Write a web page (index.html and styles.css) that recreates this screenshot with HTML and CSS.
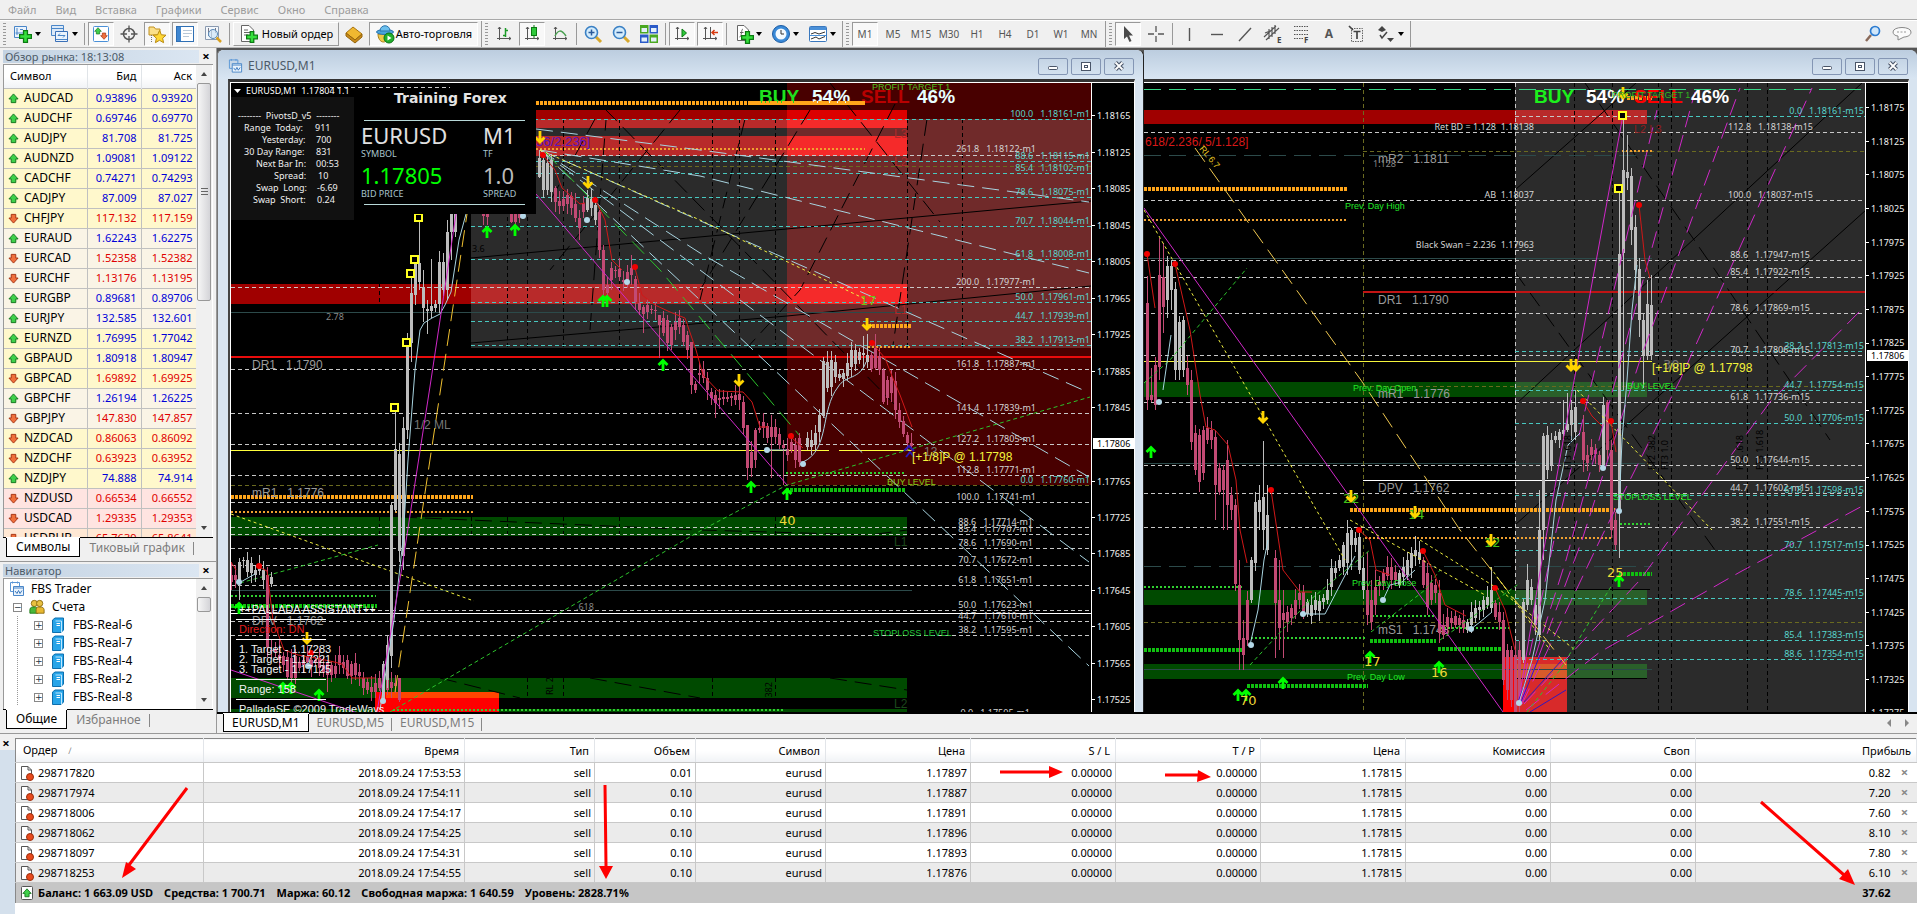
FILE: index.html
```html
<!DOCTYPE html>
<html lang="ru">
<head>
<meta charset="utf-8">
<title>EURUSD,M1</title>
<link rel="stylesheet" href="styles.css">
</head>
<body>
<svg class="defs" width="0" height="0" aria-hidden="true">
  <defs>
    <symbol id="up" viewBox="0 0 12 12"><path d="M6 1L11 6.500H8.500V10.500H3.500V6.500H1Z" fill="#3fd04a" stroke="#12701c" stroke-width="1"/></symbol>
    <symbol id="down" viewBox="0 0 12 12"><path d="M6 11L11 5.500H8.500V1.500H3.500V5.500H1Z" fill="#f0703c" stroke="#a02c0c" stroke-width="1"/></symbol>
    <symbol id="win" viewBox="0 0 16 16"><path d="M1.500 1.500H10.500V5.500M1.500 1.500V10.500H4.500M3.500 .500V2.500M8.500 .500V2.500" fill="none" stroke="#5a96d6"/><path d="M4.500 5.500H14.500V14.500H4.500Z" fill="#eaf3fc" stroke="#4a86c8"/><path d="M4.500 7H14.500" stroke="#4a86c8"/><path d="M6 10L8 12.500L9.500 9.500L11 12.500L13 9.500" fill="none" stroke="#3a78be"/></symbol>
    <symbol id="server" viewBox="0 0 14 16"><path d="M1.500 3L4 1H12.500V13L10 15.500H1.500Z" fill="#27a4e8" stroke="#0d6fae"/><path d="M4.500 4H10.500V15" fill="none" stroke="#bfe8ff"/><path d="M5.500 6.500H9M5.500 8.500H9" stroke="#fff"/></symbol>
    <symbol id="order" viewBox="0 0 16 16"><path d="M2.500 1.500H9L12.500 5V14.500H2.500Z" fill="#fff" stroke="#555"/><path d="M9 1.500V5H12.500" fill="none" stroke="#555"/><circle cx="11" cy="12" r="3.500" fill="#e84a1c" stroke="#9c2c0a"/></symbol>
    <symbol id="plus" viewBox="0 0 10 10"><path d="M3.500 .500H6.500V3.500H9.500V6.500H6.500V9.500H3.500V6.500H.500V3.500H3.500Z" fill="#35e03c" stroke="#0b7a12"/></symbol>
    <symbol id="au" viewBox="0 0 12 14"><path d="M6 13V3M1.500 7L6 2.500L10.500 7" fill="none" stroke="#0f0" stroke-width="2.800"/></symbol>
    <symbol id="ad" viewBox="0 0 12 14"><path d="M6 0V11M1.500 6.500L6 11L10.500 6.500" fill="none" stroke="#ffd400" stroke-width="2.800"/></symbol>
    <symbol id="axes" viewBox="0 0 16 16"><path d="M3.500 1V14M1 12.500H15M2 3L3.500 1L5 3M13 11L15 12.500L13 14" fill="none" stroke="#555"/></symbol>
  </defs>
</svg>

<nav class="menu"><a href="#">Файл</a><a href="#">Вид</a><a href="#">Вставка</a><a href="#">Графики</a><a href="#">Сервис</a><a href="#">Окно</a><a href="#">Справка</a></nav>

<div class="toolbar">
  <span class="grip"></span>
  <button class="tb drop" aria-label="Новый график"><svg viewBox="0 0 20 20"><path d="M1.500 2.500H13.500V13.500H1.500Z" fill="#eaf3fc" stroke="#4a86c8"/><path d="M4 4V11M2.500 9H12M7 5.500H10" stroke="#4a86c8"/><use href="#plus" x="6" y="6" width="13" height="13"/></svg></button>
  <button class="tb drop" aria-label="Профили"><svg viewBox="0 0 20 20"><path d="M1.500 1.500H13.500V11.500H1.500Z" fill="#dbe9f8" stroke="#4a86c8"/><path d="M5.500 7.500H17.500V17.500H5.500Z" fill="#eaf3fc" stroke="#3a70b8"/><path d="M2 4.500H13M6 15.500H17" stroke="#4a86c8"/><path d="M8 11.500H15M8 11.500L10 9.500M15 11.500L13 13.500" stroke="#4a86c8" fill="none"/></svg></button>
  <span class="sep"></span>
  <button class="tb on" aria-label="Обзор рынка"><svg viewBox="0 0 20 20"><rect x="2.500" y="2.500" width="15" height="15" rx="1" fill="#fff" stroke="#4a90d8"/><use href="#up" x="3" y="3" width="8" height="8"/><use href="#down" x="9" y="8" width="8" height="8"/></svg></button>
  <button class="tb" aria-label="Окно данных"><svg viewBox="0 0 20 20"><circle cx="10" cy="10" r="5.500" fill="none" stroke="#555" stroke-width="1.500"/><path d="M10 1.500V8M10 12V18.500M1.500 10H8M12 10H18.500" stroke="#555" stroke-width="1.300"/></svg></button>
  <button class="tb on" aria-label="Навигатор"><svg viewBox="0 0 20 20"><path d="M2 3H7L8.500 5H13V11H2Z" fill="#fbe08a" stroke="#c09020"/><path d="M4.500 11V18" stroke="#777" stroke-dasharray="1 1"/><path d="M12.500 6.500L14.400 10.800L19 11.200L15.600 14.200L16.600 18.700L12.500 16.300L8.400 18.700L9.400 14.200L6 11.200L10.600 10.800Z" fill="#ffd835" stroke="#b88a10"/></svg></button>
  <button class="tb on" aria-label="Терминал"><svg viewBox="0 0 20 20"><rect x="1.500" y="2.500" width="17" height="15" fill="#fff" stroke="#2f6fb4"/><path d="M2 3H6V17H2Z" fill="#3f86d0"/><path d="M8 6.500H17M8 9.500H17M8 12.500H14" stroke="#b8c8d8"/></svg></button>
  <button class="tb" aria-label="Тестер стратегий"><svg viewBox="0 0 20 20"><path d="M2.500 2.500H15.500V15.500H2.500Z" fill="#f4f8fc" stroke="#8a9ab0"/><path d="M5.500 4V12M8.500 6V14M12.500 4V9" stroke="#778"/><circle cx="10" cy="10" r="4.500" fill="#cfe6f8" fill-opacity=".7" stroke="#5a8ab8"/><path d="M13.500 13.500L18 18" stroke="#d8a020" stroke-width="2.500"/></svg></button>
  <span class="sep"></span>
  <button class="tb label raised"><svg viewBox="0 0 20 20"><path d="M2.500 1.500H10L14.500 6V17.500H2.500Z" fill="#fff" stroke="#666"/><path d="M5 6H9M5 8.500H12M5 11H9" stroke="#666"/><use href="#plus" x="7" y="7" width="12" height="12"/></svg>Новый ордер</button>
  <button class="tb" aria-label="MetaEditor"><svg viewBox="0 0 20 20"><path d="M2 9L9 3L18 10L11 16Z" fill="#f0b830" stroke="#a87410"/><path d="M2 9V12L11 19L18 13V10L11 16Z" fill="#c88a18" stroke="#94640c"/></svg></button>
  <button class="tb label on auto"><svg viewBox="0 0 20 20"><path d="M3 10H14C14 15 11 18 8.500 18C5 18 3 14 3 10Z" fill="#f0c848" stroke="#a88018"/><ellipse cx="10" cy="8" rx="8.500" ry="2.500" fill="#4aa4dc" stroke="#2a74ac"/><path d="M5 7C5 0 15 0 15 7Z" fill="#6cc0ee" stroke="#2a74ac"/><circle cx="14" cy="14" r="5" fill="#22b02c" stroke="#0c7014"/><path d="M12.500 11.500L16.500 14L12.500 16.500Z" fill="#fff"/></svg>Авто-торговля</button>
  <span class="end"></span><span class="grip"></span>
  <button class="tb" aria-label="Бары"><svg viewBox="0 0 20 20"><use href="#axes" x="2" y="2" width="16" height="16"/><path d="M11.500 4V13M9 11.500H11.500M11.500 6.500H14" stroke="#1c9a28" stroke-width="1.500"/></svg></button>
  <button class="tb on" aria-label="Свечи"><svg viewBox="0 0 20 20"><use href="#axes" x="2" y="2" width="16" height="16"/><path d="M12 1V14" stroke="#0b7a12"/><rect x="9.500" y="3.500" width="5" height="8" fill="#2ec83a" stroke="#0b7a12"/></svg></button>
  <button class="tb" aria-label="Линия"><svg viewBox="0 0 20 20"><use href="#axes" x="2" y="2" width="16" height="16"/><path d="M5 12C8 6 11 5 16 12" fill="none" stroke="#4aa052" stroke-width="1.500"/></svg></button>
  <span class="sep"></span>
  <button class="tb" aria-label="Приблизить"><svg viewBox="0 0 20 20"><path d="M12.500 12.500L18 18" stroke="#d8a82c" stroke-width="3"/><circle cx="8.500" cy="8.500" r="6" fill="#d4ecfc" stroke="#3a80c4" stroke-width="1.600"/><path d="M5.500 8.500H11.500M8.500 5.500V11.500" stroke="#2a5a9a" stroke-width="1.500"/></svg></button>
  <button class="tb" aria-label="Отдалить"><svg viewBox="0 0 20 20"><path d="M12.500 12.500L18 18" stroke="#d8a82c" stroke-width="3"/><circle cx="8.500" cy="8.500" r="6" fill="#d4ecfc" stroke="#3a80c4" stroke-width="1.600"/><path d="M5.500 8.500H11.500" stroke="#2a5a9a" stroke-width="1.500"/></svg></button>
  <button class="tb" aria-label="Плитка"><svg viewBox="0 0 20 20"><path d="M1 1H9.500V9.500H1ZM10.500 10.500H19V19H10.500Z" fill="#4aa820"/><path d="M10.500 1H19V9.500H10.500ZM1 10.500H9.500V19H1Z" fill="#2a5ac8"/><path d="M2.500 4H8V8H2.500ZM12 4H17.500V8H12ZM2.500 13.500H8V17.500H2.500ZM12 13.500H17.500V17.500H12Z" fill="#e4f0fa"/></svg></button>
  <span class="sep"></span>
  <button class="tb on" aria-label="Автопрокрутка"><svg viewBox="0 0 20 20"><use href="#axes" x="2" y="2" width="16" height="16"/><path d="M10 5V13L14.500 9Z" fill="#2ec83a" stroke="#0b7a12"/></svg></button>
  <button class="tb on" aria-label="Сдвиг графика"><svg viewBox="0 0 20 20"><use href="#axes" x="2" y="2" width="16" height="16"/><path d="M10.500 3V14" stroke="#555"/><path d="M18 8.500H12M14.500 6L12 8.500L14.500 11" stroke="#d83a10" stroke-width="1.500" fill="none"/></svg></button>
  <span class="sep"></span>
  <button class="tb drop" aria-label="Индикаторы"><svg viewBox="0 0 20 20"><path d="M3.500 1.500H10L14.500 6V16.500H3.500Z" fill="#fff" stroke="#666"/><path d="M9 5C7 5 8 13 5.500 13M6 8.500H9.500" fill="none" stroke="#666"/><use href="#plus" x="7" y="7" width="13" height="13"/></svg></button>
  <button class="tb drop" aria-label="Период"><svg viewBox="0 0 20 20"><circle cx="10" cy="10" r="8.500" fill="#3a8ad8" stroke="#1c5ca4"/><circle cx="10" cy="10" r="5.500" fill="#f4faff"/><path d="M10 6V10H13" fill="none" stroke="#333"/></svg></button>
  <button class="tb drop" aria-label="Шаблоны"><svg viewBox="0 0 20 20"><rect x="1.500" y="2.500" width="17" height="15" rx="1" fill="#fff" stroke="#3a78be"/><path d="M2 3H18V6H2Z" fill="#4a90d8"/><path d="M3 10L7 8.500L11 10L17 8M3 15L8 13L11 15L17 12.500" fill="none" stroke="#333"/><path d="M2 11.500H18" stroke="#4a90d8"/></svg></button>
  <span class="end"></span><span class="grip"></span>
  <button class="tb tf on">M1</button><button class="tb tf">M5</button><button class="tb tf">M15</button><button class="tb tf">M30</button><button class="tb tf">H1</button><button class="tb tf">H4</button><button class="tb tf">D1</button><button class="tb tf">W1</button><button class="tb tf">MN</button>
  <span class="end"></span><span class="grip"></span>
  <button class="tb on" aria-label="Курсор"><svg viewBox="0 0 20 20"><path d="M6 2V15L9 12.500L11.500 18L13.500 17L11 11.500H15Z" fill="#4a4a4a"/></svg></button>
  <button class="tb" aria-label="Перекрестие"><svg viewBox="0 0 20 20"><path d="M10 2V8M10 12V18M2 10H8M12 10H18" stroke="#555" stroke-width="1.300"/></svg></button>
  <span class="sep"></span>
  <button class="tb" aria-label="Вертикальная линия"><svg viewBox="0 0 20 20"><path d="M10.500 4V17" stroke="#555" stroke-width="1.400"/></svg></button>
  <button class="tb" aria-label="Горизонтальная линия"><svg viewBox="0 0 20 20"><path d="M4 10.500H16" stroke="#555" stroke-width="1.400"/></svg></button>
  <button class="tb" aria-label="Трендовая линия"><svg viewBox="0 0 20 20"><path d="M4 17L16 4" stroke="#555" stroke-width="1.400"/></svg></button>
  <button class="tb" aria-label="Канал"><svg viewBox="0 0 20 20"><path d="M1 13L13 2M3 16L16 4M2 9L7 7M6 15V5M9 13V3M12 10V1" stroke="#555" fill="none" stroke-width="1.200"/><text x="14" y="19" class="tag">E</text></svg></button>
  <button class="tb" aria-label="Фибоначчи"><svg viewBox="0 0 20 20"><path d="M3 2.500H17M3 6.500H17M3 10.500H17M3 14.500H12" stroke="#555" stroke-dasharray="1.500 1"/><text x="13" y="19" class="tag">F</text></svg></button>
  <button class="tb glyph">A</button>
  <button class="tb" aria-label="Текстовая метка"><svg viewBox="0 0 20 20"><rect x="4.500" y="4.500" width="11" height="13" fill="none" stroke="#666" stroke-dasharray="1.500 1"/><path d="M2 2L6 6M6.500 7.500H13.500M10 7.500V15" stroke="#444" stroke-width="1.700"/></svg></button>
  <button class="tb drop" aria-label="Стрелки"><svg viewBox="0 0 20 20"><path d="M2 6L6 2L10 6L6 8ZM11 14H18L14.500 18Z" fill="#444"/><path d="M4 11L6 14L11 8" fill="none" stroke="#444" stroke-width="1.500"/></svg></button>
  <span class="end"></span>
  <span class="spacer"></span>
  <button class="tb" aria-label="Поиск"><svg viewBox="0 0 20 20"><path d="M7 11L2 17" stroke="#8a6a5a" stroke-width="2.500"/><circle cx="11" cy="7" r="4.500" fill="#cfe6fa" stroke="#2a7ad0" stroke-width="1.700"/></svg></button>
  <button class="tb" aria-label="Чат"><svg viewBox="0 0 20 20"><path d="M1 8C1 2 19 2 19 8C19 12 14 13 12 13L6 16V12C3 12 1 10 1 8Z" fill="#fbfbfb" stroke="#888"/><path d="M5 8H15" stroke="#999" stroke-dasharray="2 1.500"/></svg></button>
</div>

<main class="main">
  <aside class="side">
    <section class="panel market">
      <header class="ptitle"><span>Обзор рынка: 18:13:08</span><button aria-label="Закрыть">×</button></header>
      <div class="pbody">
        <div class="scroll">
        <table class="quotes">
          <thead><tr><th>Символ</th><th>Бид</th><th>Аск</th></tr></thead>
          <tbody>
            <tr class="y u"><td><svg><use href="#up"/></svg>AUDCAD</td><td>0.93896</td><td>0.93920</td></tr>
            <tr class="y u"><td><svg><use href="#up"/></svg>AUDCHF</td><td>0.69746</td><td>0.69770</td></tr>
            <tr class="y u"><td><svg><use href="#up"/></svg>AUDJPY</td><td>81.708</td><td>81.725</td></tr>
            <tr class="y u"><td><svg><use href="#up"/></svg>AUDNZD</td><td>1.09081</td><td>1.09122</td></tr>
            <tr class="y u"><td><svg><use href="#up"/></svg>CADCHF</td><td>0.74271</td><td>0.74293</td></tr>
            <tr class="y u"><td><svg><use href="#up"/></svg>CADJPY</td><td>87.009</td><td>87.027</td></tr>
            <tr class="y d"><td><svg><use href="#down"/></svg>CHFJPY</td><td>117.132</td><td>117.159</td></tr>
            <tr class="c u"><td><svg><use href="#up"/></svg>EURAUD</td><td>1.62243</td><td>1.62275</td></tr>
            <tr class="c d"><td><svg><use href="#down"/></svg>EURCAD</td><td>1.52358</td><td>1.52382</td></tr>
            <tr class="c d"><td><svg><use href="#down"/></svg>EURCHF</td><td>1.13176</td><td>1.13195</td></tr>
            <tr class="c u"><td><svg><use href="#up"/></svg>EURGBP</td><td>0.89681</td><td>0.89706</td></tr>
            <tr class="c u"><td><svg><use href="#up"/></svg>EURJPY</td><td>132.585</td><td>132.601</td></tr>
            <tr class="y u"><td><svg><use href="#up"/></svg>EURNZD</td><td>1.76995</td><td>1.77042</td></tr>
            <tr class="y u"><td><svg><use href="#up"/></svg>GBPAUD</td><td>1.80918</td><td>1.80947</td></tr>
            <tr class="y d"><td><svg><use href="#down"/></svg>GBPCAD</td><td>1.69892</td><td>1.69925</td></tr>
            <tr class="c u"><td><svg><use href="#up"/></svg>GBPCHF</td><td>1.26194</td><td>1.26225</td></tr>
            <tr class="c d"><td><svg><use href="#down"/></svg>GBPJPY</td><td>147.830</td><td>147.857</td></tr>
            <tr class="y d"><td><svg><use href="#down"/></svg>NZDCAD</td><td>0.86063</td><td>0.86092</td></tr>
            <tr class="y d"><td><svg><use href="#down"/></svg>NZDCHF</td><td>0.63923</td><td>0.63952</td></tr>
            <tr class="y u"><td><svg><use href="#up"/></svg>NZDJPY</td><td>74.888</td><td>74.914</td></tr>
            <tr class="p d"><td><svg><use href="#down"/></svg>NZDUSD</td><td>0.66534</td><td>0.66552</td></tr>
            <tr class="p d"><td><svg><use href="#down"/></svg>USDCAD</td><td>1.29335</td><td>1.29353</td></tr>
            <tr class="o d"><td><svg><use href="#down"/></svg>USDRUB</td><td>65.7639</td><td>65.8641</td></tr>
          </tbody>
        </table>
        </div>
        <div class="vbar long"><i class="a-up"></i><b></b><i class="a-dn"></i></div>
      </div>
      <div class="tabs"><button class="cur">Символы</button><button>Тиковый график</button></div>
    </section>
    <section class="panel navi">
      <header class="ptitle"><span>Навигатор</span><button aria-label="Закрыть">×</button></header>
      <div class="pbody">
        <ul class="tree">
          <li class="l0"><svg><use href="#win"/></svg>FBS Trader</li>
          <li class="l1"><i class="box">−</i><svg viewBox="0 0 18 16"><circle cx="6" cy="4" r="3.500" fill="#e8c040" stroke="#8a6a10"/><circle cx="12" cy="4" r="3.500" fill="#e8c040" stroke="#8a6a10"/><path d="M1 15V11C1 8 4 8 6 8C8 8 10 9 10 11V15Z" fill="#4ab83a" stroke="#1c7a14"/><path d="M8 15V11C8 8 10 8 12.500 8C15 8 17 9 17 11V15Z" fill="#e8b830" stroke="#8a6a10"/></svg>Счета</li>
          <li class="l2"><i class="box">+</i><svg><use href="#server"/></svg>FBS-Real-6</li>
          <li class="l2"><i class="box">+</i><svg><use href="#server"/></svg>FBS-Real-7</li>
          <li class="l2"><i class="box">+</i><svg><use href="#server"/></svg>FBS-Real-4</li>
          <li class="l2"><i class="box">+</i><svg><use href="#server"/></svg>FBS-Real-2</li>
          <li class="l2"><i class="box">+</i><svg><use href="#server"/></svg>FBS-Real-8</li>
        </ul>
        <div class="vbar short"><i class="a-up"></i><b></b><i class="a-dn"></i></div>
      </div>
      <div class="tabs"><button class="cur">Общие</button><button>Избранное</button></div>
    </section>
  </aside>

  <div class="mdi">
    <div class="windows">
      <section class="window first">
        <header class="wtitle"><svg class="wicon"><use href="#win"/></svg><span>EURUSD,M1</span>
          <button aria-label="Свернуть"><svg viewBox="0 0 14 14"><rect x="2.500" y="7.500" width="9" height="3" rx="1" fill="#fff" stroke="#4a5568"/></svg></button>
          <button aria-label="Развернуть"><svg viewBox="0 0 14 14"><rect x="2.500" y="3.500" width="9" height="8" fill="#fff" stroke="#4a5568"/><rect x="5.500" y="6.500" width="3" height="2" fill="#fff" stroke="#4a5568"/></svg></button>
          <button aria-label="Закрыть"><svg viewBox="0 0 14 14"><path d="M3.500 3.500L10.500 10.500M10.500 3.500L3.500 10.500" stroke="#4a5568" stroke-width="4"/><path d="M3.500 3.500L10.500 10.500M10.500 3.500L3.500 10.500" stroke="#fff" stroke-width="1.800"/></svg></button>
        </header>
        <div class="client">
          <svg class="chart"><g transform="translate(-231 -83)">
            <rect x="787" y="83" width="304" height="402" fill="#480000"/>
            <rect x="471" y="110" width="316" height="238" fill="#2b2b2b"/>
            <rect x="787" y="119" width="304" height="229" fill="#702a2a"/>
            <path d="M471 110H787V119H471ZM231 284H471V304H231Z" fill="#a00000"/>
            <path d="M471 119H787V128H471ZM471 136H787V156H471ZM471 284H787V304H471Z" fill="#b82a2a"/>
            <path d="M787 110H907V119H787Z" fill="#dc0000"/>
            <path d="M787 119H907V128H787ZM787 136H907V156H787ZM787 284H907V304H787Z" fill="#f52a2a"/>
            <path d="M231 517H907V536H231ZM231 678H907V698H231ZM231 709H907V712H231Z" fill="#004a00"/>
            <path d="M375 692H499V712H375Z" fill="#f00"/><path d="M386 692H499V698H386Z" fill="#ff4500"/>
            <path class="k dash" d="M507.500 119V348M527.500 119V348M563.500 119V348M619.500 119V348M712.500 119V348M739.500 119V348M775.500 119V348M907.500 119V348M962.500 119V348M379.500 284V312M379.500 517V536M471.500 517V536M507.500 517V536M563.500 517V536M619.500 517V536M775.500 517V536M527.500 678V698M563.500 678V698M712.500 678V698M775.500 678V698M907.500 678V698"/>
            <path class="k" d="M471 258L1091 201M471 343L787 316L1091 286"/>
            <path class="k long" d="M605 109L900 410M830 83L940 222M595 119L548 205M745 119L700 300M680 110L550 270M810 110L700 290M895 104L800 290L745 350M927 119L893 345M590 330L606 120M400 517L700 530L870 535L907 530M440 678L520 698M590 678L700 698M830 678L907 690"/>
            <path class="teal" d="M231 312.500H912M231 590.500H912"/>
            <path class="olive dash" d="M471 166.500H1091M231 485.500H1091"/>
            <path class="w dash" d="M231 155.500H1091M231 287.500H1091M231 369.500H1091M231 413.500H1091M231 444.500H1091M231 475.500H1091M231 502.500H1091M231 527.500H1091M231 534.500H1091M231 548.500H1091M231 565.500H1091M231 585.500H1091M231 610.500H1091M231 621.500H1091M231 635.500H1091M330 87.500H450"/>
            <path class="cy dash" d="M471 119.500H1091M471 161.500H1091M471 173.500H1091M471 197.500H1091M471 226.500H1091M471 259.500H1091M471 302.500H1091M471 321.500H1091M471 345.500H1091"/>
            <path d="M231 357H1091" stroke="#e80c0c" stroke-width="2"/>
            <path d="M231 450.500H829M839 450.500H912" stroke="#ffff3c"/>
            <path d="M231 613.500H1091" stroke="#fff"/>
            <path class="ot" d="M536 103H865M231 497H473M868 326H912"/>
            <path class="on1" d="M536 149H865M231 512H473M868 347H912"/>
            <path class="gt" d="M231 606H377M786 490H905"/>
            <path class="gn" d="M231 596H376M786 473H904M393 710H784"/>
            <path class="lb long" d="M536 129L700 150L1089 202M540 150L700 176L1089 273M540 150L1083 390M540 150L700 253L1089 477M540 150L700 270L1089 562M540 150L700 300L1089 666"/>
            <path class="ye fine" d="M540 150L700 220L865 299M231 514L474 601"/>
            <path class="gl long" d="M545 152L660 270L800 436"/>
            <path class="gl dash" d="M240 583L378 545M390 712L700 531L787 485L1090 397"/>
            <text class="dim" x="326" y="320">2.78</text><text class="dim" x="576" y="610">.618</text><text class="dim dk" x="472" y="252">3.6</text>
            <text class="piv" x="252" y="369">DR1   1.1790</text><text class="piv" x="252" y="497">mR1   1.1776</text><text class="piv" x="252" y="625">DPV   1.1762</text>
            <text class="dim2" x="414" y="429">1/2 ML</text><text class="dim2" x="924" y="456">13</text>
            <text class="vio" x="536" y="146">36/2.236]</text>
            <g id="c1"></g>
            <path class="lb" d="M380 710L394 620L403 540L408 460L415 370L420 330L424 323L432 318L440 314L445 305L451 292L459 240L466 214M239 583L246 579L255 574M803 462C830 450 820 410 838 387C845 375 860 380 866 362M766 450H787"/>
            <path class="mg" d="M377 712L402 567L431 380L456 214M536 194L787 485M231 670L355 712"/>
            <path d="M395 692L467 214" fill="none" stroke="#f0c030" class="long"/>
            <path class="rd" d="M231 562L236 570M259 567L267 571L273 620L284 650L298 655L310 657L330 661L342 664L352 678H375M543 155L555 170L562 188L570 195L580 204L585 203M595 199L605 220L612 260L622 270M635 268L642 295L655 305L670 312L685 318L696 350L703 375L718 391L743 392L752 402L760 427L768 427M791 437L803 448M872 343L885 358L892 376L900 395L912 427"/>
            <g class="rdot"><circle cx="259" cy="566" r="3"/><circle cx="311" cy="653" r="3"/><circle cx="543" cy="155" r="3"/><circle cx="595" cy="200" r="3"/><circle cx="635" cy="267" r="3"/><circle cx="872" cy="343" r="3"/><circle cx="791" cy="436" r="3"/></g>
            <g class="bdot"><circle cx="239" cy="582" r="3"/><circle cx="308" cy="666" r="3"/><circle cx="383" cy="701" r="3"/><circle cx="523" cy="216" r="3"/><circle cx="587" cy="220" r="3"/><circle cx="627" cy="282" r="3"/><circle cx="767" cy="450" r="3"/><circle cx="803" cy="464" r="3"/></g>
            <g class="box2"><rect x="415" y="214" width="7" height="7"/><rect x="411" y="256" width="7" height="7"/><rect x="407" y="270" width="7" height="7"/><rect x="403" y="339" width="7" height="7"/><rect x="391" y="404" width="7" height="7"/></g>
            <use href="#au" x="481" y="225" width="12" height="14"/><use href="#au" x="509" y="223" width="12" height="14"/><use href="#au" x="597" y="294" width="12" height="14"/><use href="#au" x="601" y="294" width="12" height="14"/><use href="#au" x="657" y="358" width="12" height="14"/><use href="#au" x="745" y="480" width="12" height="14"/><use href="#au" x="781" y="487" width="12" height="14"/><use href="#au" x="233" y="601" width="12" height="14"/><use href="#au" x="277" y="681" width="12" height="14"/><use href="#au" x="285" y="681" width="12" height="14"/><use href="#au" x="313" y="688" width="12" height="14"/>
            <use href="#ad" x="534" y="131" width="12" height="14"/><use href="#ad" x="582" y="176" width="12" height="14"/><use href="#ad" x="733" y="374" width="12" height="14"/><use href="#ad" x="861" y="318" width="12" height="14"/><use href="#ad" x="301" y="632" width="12" height="14"/>
            <path d="M904 451L909 446L914 451M906 457L910 452L914 457" stroke="#2a18b8" stroke-width="2" fill="none"/>
            <rect x="231" y="97" width="123" height="123" fill="#111"/><rect x="354" y="88" width="182" height="126" fill="#000"/>
            <path d="M234 89H241L237.500 93Z" fill="#fff"/>
            <text class="t10" x="246" y="94">EURUSD,M1  1.17804 1.1</text>
            <g class="t9"><text x="238" y="119">--------  PivotsD_v5  --------</text><text x="244" y="131">Range  Today:</text><text x="315" y="131">911</text><text x="262" y="143">Yesterday:</text><text x="316" y="143">700</text><text x="244" y="155">30 Day Range:</text><text x="316" y="155">831</text><text x="256" y="167">Next Bar In:</text><text x="316" y="167">00:53</text><text x="274" y="179">Spread:</text><text x="318" y="179">10</text><text x="256" y="191">Swap  Long:</text><text x="317" y="191">-6.69</text><text x="253" y="203">Swap  Short:</text><text x="317" y="203">0.24</text></g>
            <text class="train" x="394" y="103">Training Forex</text>
            <path d="M364 120.500H525M364 204.500H525" stroke="#b8d8d8"/>
            <g class="big"><text x="361" y="144">EURUSD</text><text x="483" y="144">M1</text><text x="361" y="184" fill="#0f0">1.17805</text><text x="483" y="184" fill="#bbb">1.0</text></g>
            <g class="cap"><text x="361" y="157">SYMBOL</text><text x="483" y="157">TF</text><text x="361" y="197">BID PRICE</text><text x="483" y="197">SPREAD</text></g>
            <text class="bs" x="759" y="103" fill="#1fe01f">BUY</text><text class="bs" x="812" y="103" fill="#e8ffff">54%</text><text class="bs" x="861" y="103" fill="#b80000">SELL</text><text class="bs" x="917" y="103" fill="#e8ffff">46%</text>
            <path class="ot" d="M750 103H865"/>
            <text class="ar" x="872" y="90" fill="#50c020">PROFIT TARGET 1</text><text class="ar" x="887" y="485" fill="#80d018">BUY LEVEL</text><text class="ar" x="873" y="636" fill="#20c838">STOPLOSS LEVEL</text>
            <text class="ar12" x="912" y="461" fill="#f4f43c">[+1/8]P @ 1.17798</text>
            <text class="num" x="779" y="525" fill="#f0d838">40</text><text class="num" x="860" y="305" fill="#70c010">17</text>
            <g class="ar12" fill="#b02828"><text x="894" y="138">L3</text><text x="894" y="166">L2</text><text x="894" y="314">L1</text></g><g class="ar12" fill="#1c481c"><text x="894" y="546">L1</text><text x="894" y="708">L2</text></g>
            <g><text class="dim dk" transform="translate(553 695) rotate(-90)">RL 2</text><text class="dim dk" transform="translate(772 700) rotate(-90)">.382</text></g>
            <g class="lv cyt"><text x="1090" y="117">100.0   1.18161-m1</text><text x="1090" y="159">88.6   1.18115-m1</text><text x="1090" y="171">85.4   1.18102-m1</text><text x="1090" y="195">78.6   1.18075-m1</text><text x="1090" y="224">70.7   1.18044-m1</text><text x="1090" y="257">61.8   1.18008-m1</text><text x="1090" y="300">50.0   1.17961-m1</text><text x="1090" y="319">44.7   1.17939-m1</text><text x="1090" y="343">38.2   1.17913-m1</text><text x="1090" y="483">0.0   1.17760-m1</text></g>
            <g class="lv"><text x="1036" y="152">261.8   1.18122-m1</text><text x="1036" y="285">200.0   1.17977-m1</text><text x="1036" y="367">161.8   1.17887-m1</text><text x="1036" y="411">141.4   1.17839-m1</text><text x="1036" y="442">127.2   1.17805-m1</text><text x="1036" y="473">112.8   1.17771-m1</text><text x="1036" y="500">100.0   1.17741-m1</text><text x="1033" y="525">88.6   1.17714-m1</text><text x="1033" y="532">85.4   1.17707-m1</text><text x="1033" y="546">78.6   1.17690-m1</text><text x="1033" y="563">70.7   1.17672-m1</text><text x="1033" y="583">61.8   1.17651-m1</text><text x="1033" y="608">50.0   1.17623-m1</text><text x="1033" y="619">44.7   1.17610-m1</text><text x="1033" y="633">38.2   1.17595-m1</text><text x="1030" y="716">0.0   1.17505-m1</text></g>
            <g class="ar11"><text x="239" y="613">++PALLADA ASSISTANT++</text><text x="239" y="633" fill="#e01c1c">Direction: DN</text><text x="239" y="653">1. Target - 1.17283</text><text x="239" y="663">2. Target - 1.17221</text><text x="239" y="673">3. Target - 1.17125</text><text x="239" y="693">Range: 158</text><text x="239" y="713">PalladaSE ©2009 TradeWays</text></g>
            <path d="M236 619.500H326M236 639.500H326M236 679.500H326M236 699.500H326" stroke="#fff"/>
            <path d="M1092 83H1800V1400H1092Z" fill="#000"/><path d="M1091.500 83V1400" stroke="#fff"/>
            <path d="M1092 115.500h3M1092 152.500h3M1092 188.500h3M1092 225.500h3M1092 261.500h3M1092 298.500h3M1092 334.500h3M1092 371.500h3M1092 407.500h3M1092 481.500h3M1092 517.500h3M1092 553.500h3M1092 590.500h3M1092 626.500h3M1092 663.500h3M1092 699.500h3" stroke="#fff"/>
            <g class="ax"><text x="1097" y="119">1.18165</text><text x="1097" y="156">1.18125</text><text x="1097" y="192">1.18085</text><text x="1097" y="229">1.18045</text><text x="1097" y="265">1.18005</text><text x="1097" y="302">1.17965</text><text x="1097" y="338">1.17925</text><text x="1097" y="375">1.17885</text><text x="1097" y="411">1.17845</text><text x="1097" y="485">1.17765</text><text x="1097" y="521">1.17725</text><text x="1097" y="557">1.17685</text><text x="1097" y="594">1.17645</text><text x="1097" y="630">1.17605</text><text x="1097" y="667">1.17565</text><text x="1097" y="703">1.17525</text></g>
            <rect x="1093" y="438" width="41" height="11" fill="#fff"/><text class="ax now" x="1097" y="447">1.17806</text>
          </g></svg>
        </div>
      </section>
      <section class="window second">
        <header class="wtitle"><span></span>
          <button aria-label="Свернуть"><svg viewBox="0 0 14 14"><rect x="2.500" y="7.500" width="9" height="3" rx="1" fill="#fff" stroke="#4a5568"/></svg></button>
          <button aria-label="Развернуть"><svg viewBox="0 0 14 14"><rect x="2.500" y="3.500" width="9" height="8" fill="#fff" stroke="#4a5568"/><rect x="5.500" y="6.500" width="3" height="2" fill="#fff" stroke="#4a5568"/></svg></button>
          <button aria-label="Закрыть"><svg viewBox="0 0 14 14"><path d="M3.500 3.500L10.500 10.500M10.500 3.500L3.500 10.500" stroke="#4a5568" stroke-width="4"/><path d="M3.500 3.500L10.500 10.500M10.500 3.500L3.500 10.500" stroke="#fff" stroke-width="1.800"/></svg></button>
        </header>
        <div class="client">
          <svg class="chart"><g transform="translate(-1144 -83)">
            <rect x="1515" y="83" width="351" height="629" fill="#2b2b2b"/>
            <path d="M1144 110H1515V124H1144Z" fill="#a00000"/><path d="M1515 110H1647V124H1515Z" fill="#b82a2a"/>
            <path d="M1144 382H1515V397H1144ZM1144 590H1515V605H1144ZM1144 664H1515V679H1144Z" fill="#004a00"/>
            <path d="M1515 382H1647V397H1515ZM1515 590H1647V605H1515ZM1515 664H1647V679H1515Z" fill="#2a602a"/>
            <path d="M1503 657H1567V712H1503Z" fill="#d82a2a"/><path d="M1503 657H1515V712H1503Z" fill="#f00"/><path d="M1515 664H1567V679H1515Z" fill="#d85a2a"/>
            <path class="k dash" d="M1574.500 83V712M1612.500 83V712M1658.500 83V712M1671.500 83V712M1747.500 83V712M1767.500 83V712"/>
            <path class="k" d="M1515 190L1636 83M1515 405L1862 83M1515 525L1866 210M1144 589.500H1650M1515 678.500H1647"/>
            <path class="k long" d="M1585 83L1715 270L1830 440M1515 272L1600 390L1715 550"/>
            <path class="teal" d="M1144 258.500H1652M1144 463.500H1645M1144 669.500H1652"/><path class="teal long" d="M1144 155.500H1652M1144 566.500H1652"/>
            <path class="olive dash" d="M1363 151.500H1866M1363 386.500H1866M1144 622.500H1866M1363.500 83V712"/>
            <path d="M1144 89.500H1866" stroke="#38d888" class="long"/>
            <path class="w dash" d="M1515 116.500H1647M1144 132.500H1866M1144 200.500H1866M1515 250.500H1533M1144 260.500H1866M1144 277.500H1866M1144 313.500H1866M1144 355.500H1866M1144 402.500H1866M1144 465.500H1866M1144 493.500H1866M1144 527.500H1866M1515.500 83V712"/>
            <path class="cy dash" d="M1647 116.500H1866M1515 351.500H1866M1515 390.500H1866M1515 423.500H1866M1515 495.500H1866M1515 550.500H1866M1515 598.500H1866M1515 640.500H1866M1515 659.500H1866"/>
            <path d="M1363 292H1866" stroke="#c01414" stroke-width="2"/><path d="M1144 361.500H1652" stroke="#f4f43c"/><path d="M1363 480.500H1866" stroke="#fff"/>
            <path class="ot" d="M1144 189H1348M1350 510H1615M1627 98H1652"/><path class="on1" d="M1144 220H1348M1365 538H1613M1622 151H1652"/>
            <path class="gt" d="M1144 650H1244M1247 686H1368M1370 641H1436M1438 649H1502M1619 574H1652"/><path class="gn" d="M1144 587H1243M1247 638H1367M1372 616H1434M1440 628H1512M1620 524H1651"/>
            <g class="piv"><text x="1378" y="163">mR2   1.1811</text><text x="1378" y="304">DR1   1.1790</text><text x="1378" y="398">mR1   1.1776</text><text x="1378" y="492">DPV   1.1762</text><text x="1378" y="634">mS1   1.1748</text></g><text class="dim" x="1373" y="167">1.128</text>
            <g id="c2"></g>
            <path class="mg" d="M1144 208L1503 712M1518 705L1542 560L1565 430L1623 115"/>
            <path class="mg long" d="M1519 704L1554 540L1657 110M1520 704L1566 560L1610 400L1695 92M1521 704L1582 540L1640 360L1740 88M1522 704L1600 540L1680 380L1812 88M1524 704L1640 580L1770 402L1866 305M1526 710L1600 652L1740 572L1866 504"/>
            <path d="M1518 702L1530 670M1521 702L1540 655M1524 702L1562 660M1530 712L1566 690" stroke="#3018c0" fill="none"/>
            <path class="long" d="M1195 148L1363 383L1460 530L1566 665" stroke="#f0c850" fill="none"/>
            <path class="ye fine" d="M1144 210L1190 290L1262 415L1345 560M1577 390L1712 530M1350 520L1485 595M1420 540L1500 590L1575 650M1490 567L1550 650"/>
            <path class="gl dash" d="M1144 383L1170 360L1247 268M1250 665L1310 600L1370 550M1371 632L1425 590L1440 570M1440 640L1520 583M1527 712L1560 670L1612 585"/>
            <path class="rd" d="M1147 254L1155 308M1175 264L1190 330L1200 395L1206 427L1215 430L1228 445L1236 480L1240 530L1247 563M1271 490L1283 570L1300 592L1312 592M1359 530L1370 540L1376 570L1390 575M1423 551L1435 575L1445 605L1466 616M1495 588L1505 610L1515 650M1583 401L1592 416L1602 426M1611 421L1616 452M1639 205L1645 260L1650 278"/>
            <path class="lb" d="M1163 390L1171 335M1250 645L1258 610L1264 560L1268 540M1303 614H1325L1340 585L1355 556M1383 600L1390 585L1402 582L1415 570M1471 629L1480 622L1492 612M1519 703L1532 660L1545 600L1556 500L1568 445L1580 433M1619 510L1622 440L1627 380L1632 310L1637 265"/>
            <g class="rdot"><circle cx="1147" cy="254" r="3"/><circle cx="1175" cy="264" r="3"/><circle cx="1271" cy="490" r="3"/><circle cx="1359" cy="530" r="3"/><circle cx="1423" cy="551" r="3"/><circle cx="1495" cy="588" r="3"/><circle cx="1583" cy="401" r="3"/><circle cx="1611" cy="421" r="3"/><circle cx="1639" cy="205" r="3"/></g>
            <g class="bdot"><circle cx="1159" cy="402" r="3"/><circle cx="1251" cy="645" r="3"/><circle cx="1303" cy="614" r="3"/><circle cx="1383" cy="600" r="3"/><circle cx="1471" cy="629" r="3"/><circle cx="1519" cy="703" r="3"/><circle cx="1603" cy="468" r="3"/><circle cx="1619" cy="511" r="3"/></g>
            <g class="box2"><rect x="1619" y="112" width="7" height="7"/><rect x="1615" y="185" width="7" height="7"/></g>
            <use href="#au" x="1145" y="445" width="12" height="14"/><use href="#au" x="1232" y="688" width="12" height="14"/><use href="#au" x="1240" y="688" width="12" height="14"/><use href="#au" x="1277" y="676" width="12" height="14"/><use href="#au" x="1364" y="650" width="12" height="14"/><use href="#au" x="1433" y="660" width="12" height="14"/><use href="#au" x="1613" y="574" width="12" height="14"/>
            <g class="num" fill="#40c018"><text x="1343" y="503">22</text><text x="1408" y="519">14</text><text x="1484" y="547">12</text></g>
            <use href="#ad" x="1257" y="411" width="12" height="14"/><use href="#ad" x="1345" y="490" width="12" height="14"/><use href="#ad" x="1409" y="506" width="12" height="14"/><use href="#ad" x="1485" y="534" width="12" height="14"/><use href="#ad" x="1565" y="359" width="12" height="14"/><use href="#ad" x="1570" y="359" width="12" height="14"/>
            <g class="num" fill="#f0d838"><text x="1364" y="666">17</text><text x="1431" y="677">16</text><text x="1240" y="705">70</text><text x="1607" y="577">25</text></g><text class="num" x="1663" y="369" fill="#777">30</text>
            <g><text class="dim dk" transform="translate(1571 470) rotate(-90)">FT3 .618</text><text class="dim dk" transform="translate(1655 470) rotate(-90)">FT2 .382</text><text class="dim dk" transform="translate(1668 470) rotate(-90)">FT3 1.0</text><text class="dim dk" transform="translate(1743 470) rotate(-90)">FT2 .618</text><text class="dim dk" transform="translate(1763 470) rotate(-90)">FT3 1.618</text></g>
            <text class="ar12" x="1145" y="146" fill="#d81818">618/2.236/.5/1.128]</text>
            <text class="ar" transform="translate(1199 149) rotate(50)" fill="#e0c020">RL 6.7</text>
            <g class="ar" fill="#20e828"><text x="1345" y="209">Prev. Day High</text><text x="1353" y="391">Prev. Day Open</text><text x="1352" y="586">Prev. Day Close</text><text x="1347" y="680">Prev. Day Low</text><text x="1627" y="389">BUY LEVEL</text><text x="1613" y="500">STOPLOSS LEVEL</text></g>
            <text class="bs" x="1534" y="103" fill="#1cf01c">BUY</text><text class="bs" x="1586" y="103" fill="#fff">54%</text><text class="bs" x="1634" y="103" fill="#f00">SELL</text><text class="bs" x="1691" y="103" fill="#fff">46%</text>
            <use href="#ad" x="1617" y="87" width="12" height="14"/><text class="ar" x="1612" y="98" fill="#30b820">PROFIT TARGET 1</text>
            <text class="ar11" x="1634" y="133" fill="#901c1c">L2 L3</text>
            <g class="lv"><text x="1534" y="130">Ret BD = 1.128  1.18138</text><text x="1534" y="198">AB  1.18037</text><text x="1534" y="248">Black Swan = 2.236  1.17963</text>
            <text x="1813" y="130">112.8   1.18138-m15</text><text x="1813" y="198">100.0   1.18037-m15</text><text x="1810" y="258">88.6   1.17947-m15</text><text x="1810" y="275">85.4   1.17922-m15</text><text x="1810" y="311">78.6   1.17869-m15</text><text x="1810" y="353">70.7   1.17806-m15</text><text x="1810" y="400">61.8   1.17736-m15</text><text x="1810" y="463">50.0   1.17644-m15</text><text x="1810" y="491">44.7   1.17602-m15</text><text x="1810" y="525">38.2   1.17551-m15</text></g>
            <g class="lv cyt"><text x="1864" y="114">0.0   1.18161-m15</text><text x="1864" y="349">38.2   1.17813-m15</text><text x="1864" y="388">44.7   1.17754-m15</text><text x="1864" y="421">50.0   1.17706-m15</text><text x="1864" y="493">61.8   1.17598-m15</text><text x="1864" y="548">70.7   1.17517-m15</text><text x="1864" y="596">78.6   1.17445-m15</text><text x="1864" y="638">85.4   1.17383-m15</text><text x="1864" y="657">88.6   1.17354-m15</text></g>
            <text class="ar12" x="1652" y="372" fill="#f4f43c">[+1/8]P @ 1.17798</text>
            <path d="M1866 83H2600V1400H1866Z" fill="#000"/><path d="M1865.500 83V1400" stroke="#fff"/>
            <path d="M1866 107.500h3M1866 141.500h3M1866 174.500h3M1866 208.500h3M1866 242.500h3M1866 275.500h3M1866 309.500h3M1866 343.500h3M1866 376.500h3M1866 410.500h3M1866 443.500h3M1866 477.500h3M1866 511.500h3M1866 545.500h3M1866 578.500h3M1866 612.500h3M1866 645.500h3M1866 679.500h3" stroke="#fff"/>
            <g class="ax"><text x="1871" y="111">1.18175</text><text x="1871" y="145">1.18125</text><text x="1871" y="178">1.18075</text><text x="1871" y="212">1.18025</text><text x="1871" y="246">1.17975</text><text x="1871" y="279">1.17925</text><text x="1871" y="313">1.17875</text><text x="1871" y="346">1.17825</text><text x="1871" y="380">1.17775</text><text x="1871" y="414">1.17725</text><text x="1871" y="447">1.17675</text><text x="1871" y="481">1.17625</text><text x="1871" y="515">1.17575</text><text x="1871" y="548">1.17525</text><text x="1871" y="582">1.17475</text><text x="1871" y="616">1.17425</text><text x="1871" y="649">1.17375</text><text x="1871" y="683">1.17325</text><text x="1871" y="716">1.17275</text></g>
            <rect x="1867" y="350" width="41" height="11" fill="#fff"/><text class="ax now" x="1871" y="359">1.17806</text>
          </g></svg>
        </div>
      </section>
    </div>
    <div class="tabs wtabs"><button class="cur">EURUSD,M1</button><button>EURUSD,M5</button><button>EURUSD,M15</button><span class="arrows"><i></i><i></i></span></div>
  </div>
</main>

<section class="terminal">
  <div class="tside"><button aria-label="Закрыть">×</button></div>
  <table class="orders">
    <colgroup><col class="c1"><col class="c2"><col class="c3"><col class="c4"><col class="c3"><col class="c5"><col class="c5"><col class="c5"><col class="c5"><col class="c5"><col class="c5"><col></colgroup>
    <thead><tr><th>Ордер <small>∕</small></th><th>Время</th><th>Тип</th><th>Объем</th><th>Символ</th><th>Цена</th><th>S / L</th><th>T / P</th><th>Цена</th><th>Комиссия</th><th>Своп</th><th>Прибыль</th></tr></thead>
    <tbody>
      <tr><td><svg><use href="#order"/></svg>298717820</td><td>2018.09.24 17:53:53</td><td>sell</td><td>0.01</td><td>eurusd</td><td>1.17897</td><td>0.00000</td><td>0.00000</td><td>1.17815</td><td>0.00</td><td>0.00</td><td>0.82<button>×</button></td></tr>
      <tr><td><svg><use href="#order"/></svg>298717974</td><td>2018.09.24 17:54:11</td><td>sell</td><td>0.10</td><td>eurusd</td><td>1.17887</td><td>0.00000</td><td>0.00000</td><td>1.17815</td><td>0.00</td><td>0.00</td><td>7.20<button>×</button></td></tr>
      <tr><td><svg><use href="#order"/></svg>298718006</td><td>2018.09.24 17:54:17</td><td>sell</td><td>0.10</td><td>eurusd</td><td>1.17891</td><td>0.00000</td><td>0.00000</td><td>1.17815</td><td>0.00</td><td>0.00</td><td>7.60<button>×</button></td></tr>
      <tr><td><svg><use href="#order"/></svg>298718062</td><td>2018.09.24 17:54:25</td><td>sell</td><td>0.10</td><td>eurusd</td><td>1.17896</td><td>0.00000</td><td>0.00000</td><td>1.17815</td><td>0.00</td><td>0.00</td><td>8.10<button>×</button></td></tr>
      <tr><td><svg><use href="#order"/></svg>298718097</td><td>2018.09.24 17:54:31</td><td>sell</td><td>0.10</td><td>eurusd</td><td>1.17893</td><td>0.00000</td><td>0.00000</td><td>1.17815</td><td>0.00</td><td>0.00</td><td>7.80<button>×</button></td></tr>
      <tr><td><svg><use href="#order"/></svg>298718253</td><td>2018.09.24 17:54:55</td><td>sell</td><td>0.10</td><td>eurusd</td><td>1.17876</td><td>0.00000</td><td>0.00000</td><td>1.17815</td><td>0.00</td><td>0.00</td><td>6.10<button>×</button></td></tr>
    </tbody>
    <tfoot><tr><td colspan="11"><svg viewBox="0 0 16 16"><rect x="2.500" y="1.500" width="11" height="13" rx="1" fill="#fff" stroke="#555"/><use href="#up" x="3" y="3" width="10" height="10"/></svg><span class="sums"><span>Баланс: 1 663.09 USD</span><span>Средства: 1 700.71</span><span>Маржа: 60.12</span><span>Свободная маржа: 1 640.59</span><span>Уровень: 2828.71%</span></span></td><td>37.62</td></tr></tfoot>
  </table>
  <svg class="marks"><g transform="translate(0 -738)">
    <path d="M187 788L129 865M605 785L606 866M1000 772H1050M1165 775H1198M1761 802L1844 875" fill="none" stroke="#f00" stroke-width="3"/>
    <path d="M122 878L126 862L136 869ZM606 879L599 866H613ZM1063 772L1049 766V778ZM1211 777L1198 770L1197 782ZM1855 885L1839 879L1848 869Z" fill="#f00"/>
  </g></svg>
</section>
<script src="candles.js"></script>
</body>
</html>
```
FILE: styles.css
```css
* { box-sizing: border-box; }
html, body { height: 100%; }
body { margin: 0; display: flex; flex-direction: column; overflow: hidden; background: #f0f0f0; color: #000; font: 11px/16px "Noto Sans", "Open Sans", sans-serif; }
button { font: inherit; color: inherit; background: none; border: 0; padding: 0; margin: 0; }
.defs { position: absolute; }

.menu { display: flex; gap: 19px; padding: 0 8px; height: 19px; align-items: center; flex: none; }
.menu a { color: #9c9c9c; text-decoration: none; }

.toolbar { display: flex; align-items: center; flex: none; height: 29px; padding: 0 0 0 2px; border-top: 1px solid #a8a8a8; border-bottom: 1px solid #b8b8b8; box-shadow: inset 0 1px #fff; }
.tb { width: 26px; height: 24px; margin-right: 2px; display: flex; align-items: center; justify-content: center; border: 1px solid transparent; flex: none; white-space: nowrap; }
.tb svg { width: 20px; height: 20px; flex: none; }
.tb.on { background: #f8f8f8; border-color: #999 #fff #fff #999; }
.tb.drop { width: 35px; margin-right: 2px; }
.tb.drop::after { content: ""; margin-left: 2px; border: 3px solid transparent; border-top: 4px solid #000; border-bottom: 0; }
.tb.label { width: 106px; gap: 3px; }
.tb.raised { border-color: #fff #999 #999 #fff; }
.tb.auto { width: 109px; gap: 1px; }
.tb.tf { color: #555; font-size: 10px; }
.tb.glyph { font-weight: bold; color: #555; font-size: 12px; }
.tag { font: bold 8px "Noto Sans", sans-serif; fill: #444; }
.grip { width: 3px; height: 22px; margin: 0 3px 0 1px; background: repeating-linear-gradient(#999 0 1px, #f0f0f0 1px 3px); flex: none; }
.sep { width: 1px; height: 22px; margin: 0 3px 0 1px; background: #999; flex: none; }
.end { width: 1px; height: 26px; margin: 0 2px 0 1px; background: #999; flex: none; }
.spacer { flex: 1; }

.main { flex: 1; min-height: 0; display: flex; }
.side { width: 217px; flex: none; display: flex; flex-direction: column; border-right: 1px solid #999; }
.panel { display: flex; flex-direction: column; padding: 2px 3px 0; border-bottom: 1px solid #999; }
.market { flex: 515 1 0; min-height: 0; }
.navi { flex: 170 1 0; min-height: 0; }
.ptitle { display: flex; justify-content: space-between; align-items: center; height: 13px; flex: none; color: #4c5a68; line-height: 13px; }
.ptitle span { flex: 1; background: linear-gradient(90deg, #c4d3e2, #dbe6f2); padding-left: 2px; }
.ptitle button { width: 14px; font: bold 13px/13px "Noto Sans", sans-serif; color: #000; }
.pbody { flex: 1; min-height: 0; display: flex; margin-top: 1px; border-left: 1px solid #999; border-top: 1px solid #999; background: #fff; }
.scroll { flex: 1; overflow: hidden; }
.quotes { border-collapse: collapse; width: 193px; table-layout: fixed; }
.quotes th { height: 23px; padding: 0 4px; font-weight: normal; text-align: right; border-right: 1px solid #e0e4e8; background: linear-gradient(#fff 50%, #f1f3f6); }
.quotes th:first-child { width: 83px; text-align: left; padding-left: 6px; }
.quotes th:nth-child(2) { width: 54px; }
.quotes td { height: 20px; padding: 0 4px 0 0; border: solid #c0c0c0; border-width: 1px 1px 1px 0; text-align: right; line-height: 16px; }
.quotes td:last-child { border-right: 0; }
.quotes td:first-child { text-align: left; color: #000; font-size: 12px; padding-left: 4px; white-space: nowrap; }
.quotes td svg { width: 11px; height: 11px; margin-right: 5px; vertical-align: -2px; }
.y td { background: #fff8cc; } .c td { background: #faf4e6; } .p td { background: #ffe4e1; } .o td { background: #ffe8d4; }
.u td { color: #0000d8; } .d td { color: #e00000; }
.vbar { width: 16px; margin-right: 1px; background: #f0f0f0; display: flex; flex-direction: column; align-items: center; padding: 7px 0; flex: none; }
.vbar i { border: 3px solid transparent; }
.vbar .a-up { border-bottom: 4px solid #444; border-top: 0; }
.vbar .a-dn { border-top: 4px solid #444; border-bottom: 0; margin-top: auto; }
.vbar b { width: 14px; margin-top: 7px; border: 1px solid #989898; border-radius: 2px; background: linear-gradient(90deg, #f6f6f6, #d4d4d8); display: flex; align-items: center; justify-content: center; }
.long b { height: 218px; } .short b { height: 15px; }
.long b::before { content: ""; width: 7px; height: 8px; background: repeating-linear-gradient(#666 0 1px, transparent 1px 3px); }
.tabs { display: flex; align-items: flex-start; height: 24px; flex: none; border-top: 1px solid #000; padding-left: 3px; color: #7c7c7c; }
.tabs button { height: 19px; padding: 0 9px; position: relative; font-size: 12px; line-height: 16px; }
.tabs button + button::after { content: ""; position: absolute; right: 0; top: 4px; height: 13px; border-right: 1px solid #888; }
.tabs .cur { background: #fff; color: #000; border: 1px solid #000; border-top: 0; box-shadow: 0 -1px #fff; }
.tree { list-style: none; margin: 0; padding: 1px 0 0; flex: 1; overflow: hidden; font-size: 12px; }
.tree li { height: 18px; display: flex; align-items: center; }
.tree svg { width: 16px; height: 16px; }
.l0 { padding-left: 5px; gap: 6px; }
.l1 { padding-left: 9px; gap: 7px; }
.l2 { padding-left: 30px; gap: 8px; background: repeating-linear-gradient(#999 0 1px, transparent 1px 2px) 13px 0 / 1px 100% no-repeat; }
.l2 svg { width: 14px; }
.box { width: 9px; height: 9px; border: 1px solid #888; font: 9px/7px "DejaVu Sans", sans-serif; text-align: center; color: #234; background: #fff; }

.mdi { flex: 1; min-width: 0; display: flex; flex-direction: column; border-bottom: 1px solid #999; }
.windows { flex: 1; min-height: 0; display: grid; grid-template-columns: 927fr 773fr; grid-template-rows: minmax(0, 1fr); background: #555; padding-top: 1px; }
.window { display: flex; flex-direction: column; min-width: 0; background: #d8e4f0; border-top: 1px solid #555; }
.first { border-right: 1px solid #222; border-radius: 6px 7px 0 0; padding: 0 8px 0 10px; border-left: 1px solid #777; }
.second { border-radius: 0 7px 0 0; padding-right: 8px; }
.wtitle { display: flex; align-items: center; gap: 3px; height: 29px; flex: none; margin: 0 -8px 0 -10px; padding: 3px 9px 0 10px; background: linear-gradient(#bccddf, #d8e5f2); border-radius: 6px 7px 0 0; color: #4c5a68; font-size: 12px; }
.second .wtitle { margin-left: 0; border-radius: 0 7px 0 0; }
.wtitle span { flex: 1; padding-left: 2px; }
.wicon { width: 15px; height: 16px; }
.wtitle button { width: 30px; height: 17px; border: 1px solid #8496b4; border-radius: 2px; display: flex; align-items: center; justify-content: center; }
.wtitle button svg { width: 14px; height: 14px; }
.client { flex: 1; min-height: 0; display: flex; background: #000; border-top: 3px solid #333; border-right: 1px solid #fff; }
.first .client { border-left: 2px solid #444; }
.chart { flex: 1; min-width: 0; min-height: 0; border-top: 1px solid #fff; background: #000; }
.first .chart { border-left: 1px solid #fff; }
.chart text { white-space: pre; }
.k { stroke: #000; fill: none; }
.dash { stroke-dasharray: 4 3; }
.fine { stroke-dasharray: 3 3; }
.long { stroke-dasharray: 17 8; }
.w { stroke: #c8c8c8; fill: none; }
.cy { stroke: #48c8c0; fill: none; }
.teal { stroke: #2c4a4a; fill: none; }
.olive { stroke: #6a6a20; fill: none; }
.lb { stroke: #a8d4e0; fill: none; }
.ye { stroke: #f0f040; fill: none; }
.gl { stroke: #2cc42c; fill: none; }
.mg { stroke: #d028c8; fill: none; }
.rd { stroke: #d01818; fill: none; }
.ot { stroke: #ffa51a; stroke-width: 4; stroke-dasharray: 3 1; }
.on1 { stroke: #f0a030; stroke-width: 2; stroke-dasharray: 2 2; }
.gt { stroke: #10c010; stroke-width: 4; stroke-dasharray: 3 1; }
.gn { stroke: #30d030; stroke-width: 2; stroke-dasharray: 2 2; }
.rdot { fill: #f00000; } .bdot { fill: #b4d8e8; }
.box2 rect { fill: #000; stroke: #ffff20; stroke-width: 2; }
.grey { stroke: #bdbdbd; } .pink { stroke: #c24a74; }
.body { stroke-width: 3; fill: none; } .wick { stroke-width: 1; fill: none; }
.ax, .t9, .lv { font: 9px "Noto Sans", sans-serif; fill: #f0f0f0; }
.now { fill: #000; }
.lv { text-anchor: end; fill: #d4d4d4; }
.cyt { fill: #58d4cc; }
.t10 { font: 9px "Noto Sans", sans-serif; fill: #fff; }
.dim { font: 9px "Noto Sans", sans-serif; fill: #858585; }
.dk { fill: #000; }
.piv { font: 12px "Liberation Sans", Arial, sans-serif; fill: #9a9a9a; }
.dim2 { font: 12px "Liberation Sans", Arial, sans-serif; fill: #777; }
.vio { font: 13px "Liberation Sans", Arial, sans-serif; fill: #5a14c0; }
.train { font: bold 14px "DejaVu Sans", sans-serif; fill: #e4e4e4; }
.big { font: 22px "Noto Sans", sans-serif; fill: #e0e0e0; }
.cap { font: 9px "Noto Sans", sans-serif; fill: #a8c4cc; }
.bs { font: bold 19px "Liberation Sans", Arial, sans-serif; }
.ar { font: 9px "Liberation Sans", Arial, sans-serif; }
.ar11 { font: 11px "Liberation Sans", Arial, sans-serif; }
g.ar11 { fill: #f4f4f4; }
.ar12 { font: 12px "Liberation Sans", Arial, sans-serif; }
.num { font: 13px "DejaVu Sans", sans-serif; }

.wtabs { height: 21px; border-top: 2px solid #000; padding-left: 6px; }
.wtabs button { height: 18px; padding: 0 8px; }
.arrows { margin-left: auto; display: flex; gap: 14px; padding: 5px 8px; }
.arrows i { border: 4px solid transparent; border-right-color: #888; border-left: 0; }
.arrows i + i { border-left: 4px solid #888; border-right: 0; }

.terminal { position: relative; flex: none; display: flex; min-height: 180px; padding-top: 4px; }
.tside { width: 15px; flex: none; background: linear-gradient(#f0f0f0 12px, #d4e0ec 12px); }
.tside button { display: block; width: 12px; font: bold 13px/11px "Noto Sans", sans-serif; }
.orders { flex: 1; align-self: flex-start; table-layout: fixed; border-collapse: collapse; background: #fff; border-top: 1px solid #888; border-left: 1px solid #888; width: 100%; }
.terminal::after { content: ""; position: absolute; z-index: -1; inset: 4px 0 0 15px; background: #fff; }
.c1 { width: 188px; } .c2 { width: 261px; } .c3 { width: 130px; } .c4 { width: 101px; } .c5 { width: 145px; }
.orders th { height: 24px; font-weight: normal; text-align: right; padding: 0 5px; border-right: 1px solid #e2e5e9; border-bottom: 1px solid #c8c8c8; background: linear-gradient(#fff 50%, #f0f2f5); }
.orders th:first-child { text-align: left; padding-left: 7px; }
.orders small { margin-left: 8px; color: #888; font-size: 9px; }
.orders td { height: 20px; padding: 0 3px; text-align: right; border-right: 1px solid #c8c8c8; border-bottom: 1px solid #c8c8c8; line-height: 16px; white-space: pre; }
.orders td:first-child { text-align: left; }
.orders td:last-child { border-right: 0; padding-right: 5px; }
.orders td button { width: 14px; margin-left: 7px; color: #888; font: bold 13px/12px "Noto Sans", sans-serif; }
.orders td svg { width: 16px; height: 16px; margin-right: 3px; vertical-align: -4px; }
.orders tbody tr:nth-child(even) td { background: #ebebeb; }
.orders tfoot td { background: #c6c6c6; border: 0; font-weight: bold; }
.orders tfoot td:last-child { padding-right: 26px; }
.sums { display: inline-flex; gap: 11px; }
.marks { position: absolute; left: 0; top: 4px; width: 100%; height: 176px; pointer-events: none; }
```
FILE: candles.js
```js
// Each run: colour, first x, then "top-bottom" of every body, 4px apart.
// An optional ":high-low" gives the wick; without it a short one is drawn.
const CHARTS = {
  c1: `p 231 575-582:562-590 575-580
g 239 562-582:558-600 560-561:557-568 560-572 563-573 570-575 566-571 570-580 577-583 577-584
p 267 575-647:567-657 650-651 650-652 655-660:640-668 656-665 657-677:650-680 658-678 656-678 662-668 660-665 656-662 660-667
p 315 660-662 658-668 665-672 662-675:662-692 665-675 666-674 655-665 662-668 660-676 664-676 663-675 672-676 678-688 682-690 687-692 683-692 678-688 682-690 680-690 682-688 683-686 678-700:678-702
g 383 664-700 645-680 505-656:502-668 449-510:408-512 454-551:443-562 428-556:417-570 342-430 293-343:275-362 263-295:258-305 263-282:217-290 287-308:270-322 309-311:300-334 306-311:259-318 304-308 262-304 262-290 232-290:220-300 214-232:214-260 214-232
p 483 214-216:214-225 214-217:214-225
p 511 214-222:214-223 214-222 214-218
g 539 158-177:150-178 160-190 163-190 160-192
p 555 188-202:186-212 201-206 199-206 195-204 196-208 204-218 218-228:210-240 203-212
g 587 198-210:190-212 199-208 205-220
p 599 212-250:210-258 250-290:245-295 285-293 268-280 270-271 269-277 280-282 272-282 268-275:255-285 279-302 303-310 307-314:305-333 305-312 309-310 310-311:302-320 315-325:318-358 318-333 320-343 327-345 322-330 318-327 325-342 335-350 342-385:342-394
p 695 384-390 373-375 369-378 378-390 392-398 395-403:390-418 398-400 397-399 397-399 396-398 395-400 394-400 402-428 425-468:425-480 452-468 430-460:428-468 428-430 422-428:413-438 426-438 427-437:415-478 427-437 434-445 445-448:440-485 449-455 442-450 445-460 438-462
g 807 438-447:432-450 440-447 433-445 415-432 361-416:357-418 362-388 360-387 362-377 374-378 373-379 363-376 350-367 350-364 352-360 353-355:336-368 355-362:334-368
p 871 355-369 348-368:334-370 356-370 370-402:368-404 380-398 377-393:370-402 381-410 410-422 421-434 435-443 443-446`,
  c2: `p 1147 303-400:276-410 395-400:368-402 365-405 275-367:238-380 277-307:243-333
g 1167 266-300:256-318 266-290:260-310 289-370:282-380 322-370 320-370
p 1187 368-385:356-395 380-442 433-470 435-482 430-473 428-440 430-440 437-485:430-520 468-492 470-490:465-530 460-505:440-530 495-510 505-584 585-640:560-670 638-655:620-670 600-640
g 1251 560-600 502-563 500-512:485-530 497-530:441-550 515-550:485-555
p 1275 558-603:550-658 600-628:560-650 613-620:590-658 612-622 608-618 600-615 593-600 592-613
g 1307 602-614 605-616 600-610 601-611 598-602 590-600 568-587 568-573 560-568 545-567 533-563:520-575 530-545:528-570 538-545 537-570 568-590
p 1367 590-615:552-625 600-622:580-630 587-605:570-615 582-586 573-583 567-576 567-580 572-580
g 1399 573-585 567-577 560-575 553-568 550-556:536-566 552-560
p 1423 560-585 573-607 583-600 585-593 593-633:580-643 625-635 617-627 618-623 616-625 618-625 620-628
g 1467 622-630 612-625 608-618 607-610 600-610 597-605 590-608:567-612
p 1495 603-617 612-622 620-680 650-690 650-700 655-712:640-712 650-705
g 1523 602-660 580-605:564-610 587-600 605-625 530-635:490-640 436-530:433-560 435-470 440-465 436-440 432-440 430-434:400-440 424-430:393-432 410-425:400-440 407-432:390-440
p 1583 432-460:415-472 455-463 447-455 450-454 455-465
g 1603 405-465:397-470
p 1607 402-450:400-460 450-530 520-545
g 1619 254-510:190-558 170-253:120-390 172-178:135-190 176-230:168-245 227-270:215-290 269-320:258-337 320-355:313-388 304-356:280-360 305-355:275-360`
};

const SVG = "http://www.w3.org/2000/svg";

function addPath(parent, cls, d) {
  const path = document.createElementNS(SVG, "path");
  path.setAttribute("class", cls);
  path.setAttribute("d", d);
  parent.append(path);
}

for (const [id, runs] of Object.entries(CHARTS)) {
  const group = document.getElementById(id);
  for (const run of runs.split("\n")) {
    const [colour, start, ...bars] = run.split(" ");
    let wicks = "";
    let bodies = "";
    bars.forEach((bar, i) => {
      const x = Number(start) + i * 4 + 0.5;
      const [body, wick] = bar.split(":");
      const [top, bottom] = body.split("-").map(Number);
      const [high, low] = wick
        ? wick.split("-").map(Number)
        : [top - 3 - (i * 7) % 9, bottom + 3 + (i * 5) % 8];
      wicks += `M${x} ${high}V${low}`;
      bodies += `M${x} ${top}V${bottom}`;
    });
    const tone = colour === "g" ? "grey" : "pink";
    addPath(group, `wick ${tone}`, wicks);
    addPath(group, `body ${tone}`, bodies);
  }
}
```
